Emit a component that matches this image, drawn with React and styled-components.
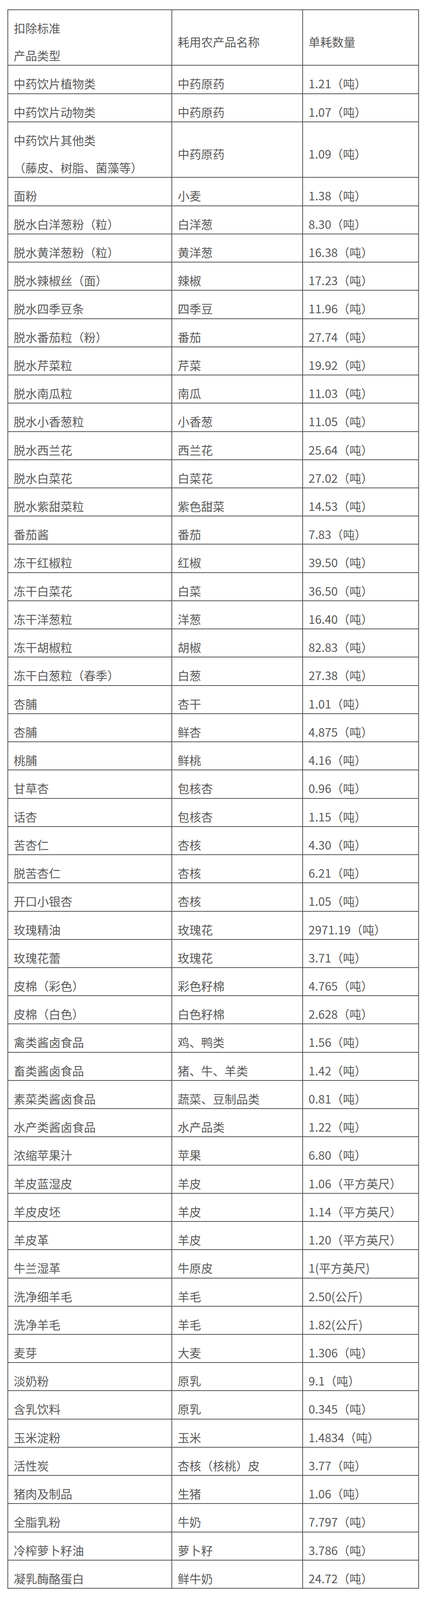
import React from "react";
import styled, { createGlobalStyle } from "styled-components";

const GlobalStyle = createGlobalStyle`
  *, *::before, *::after {
    box-sizing: border-box;
  }
  html, body {
    margin: 0;
    padding: 0;
    background: #ffffff;
  }
  body {
    font-family: "Noto Sans CJK SC", "Noto Sans", sans-serif;
  }
`;

const Page = styled.div`
  padding: 24px 0 0 19px;
  background: #ffffff;
`;

const Table = styled.table`
  border-collapse: collapse;
  table-layout: fixed;
  width: 1052px;
  color: #595959;
  font-family: "Noto Sans CJK SC", "Noto Sans", sans-serif;
  font-size: 30px;
  border: 2px solid #555555;
`;

const Col = styled.col`
  width: ${(p) => p.$w}px;
`;

const Cell = styled.td`
  border: 2px solid #555555;
  padding: 0 0 0 14px;
  vertical-align: middle;
  text-align: left;
  font-weight: 400;
  white-space: nowrap;
`;

const Line = styled.p`
  margin: 0;
  height: 70.24px;
  padding: 25px 0 0;
  line-height: 40px;
`;

const rows = [
  [["中药饮片植物类"], "中药原药", "1.21（吨）"],
  [["中药饮片动物类"], "中药原药", "1.07（吨）"],
  [["中药饮片其他类", "（藤皮、树脂、菌藻等）"], "中药原药", "1.09（吨）"],
  [["面粉"], "小麦", "1.38（吨）"],
  [["脱水白洋葱粉（粒）"], "白洋葱", "8.30（吨）"],
  [["脱水黄洋葱粉（粒）"], "黄洋葱", "16.38（吨）"],
  [["脱水辣椒丝（面）"], "辣椒", "17.23（吨）"],
  [["脱水四季豆条"], "四季豆", "11.96（吨）"],
  [["脱水番茄粒（粉）"], "番茄", "27.74（吨）"],
  [["脱水芹菜粒"], "芹菜", "19.92（吨）"],
  [["脱水南瓜粒"], "南瓜", "11.03（吨）"],
  [["脱水小香葱粒"], "小香葱", "11.05（吨）"],
  [["脱水西兰花"], "西兰花", "25.64（吨）"],
  [["脱水白菜花"], "白菜花", "27.02（吨）"],
  [["脱水紫甜菜粒"], "紫色甜菜", "14.53（吨）"],
  [["番茄酱"], "番茄", "7.83（吨）"],
  [["冻干红椒粒"], "红椒", "39.50（吨）"],
  [["冻干白菜花"], "白菜", "36.50（吨）"],
  [["冻干洋葱粒"], "洋葱", "16.40（吨）"],
  [["冻干胡椒粒"], "胡椒", "82.83（吨）"],
  [["冻干白葱粒（春季）"], "白葱", "27.38（吨）"],
  [["杏脯"], "杏干", "1.01（吨）"],
  [["杏脯"], "鲜杏", "4.875（吨）"],
  [["桃脯"], "鲜桃", "4.16（吨）"],
  [["甘草杏"], "包核杏", "0.96（吨）"],
  [["话杏"], "包核杏", "1.15（吨）"],
  [["苦杏仁"], "杏核", "4.30（吨）"],
  [["脱苦杏仁"], "杏核", "6.21（吨）"],
  [["开口小银杏"], "杏核", "1.05（吨）"],
  [["玫瑰精油"], "玫瑰花", "2971.19（吨）"],
  [["玫瑰花蕾"], "玫瑰花", "3.71（吨）"],
  [["皮棉（彩色）"], "彩色籽棉", "4.765（吨）"],
  [["皮棉（白色）"], "白色籽棉", "2.628（吨）"],
  [["禽类酱卤食品"], "鸡、鸭类", "1.56（吨）"],
  [["畜类酱卤食品"], "猪、牛、羊类", "1.42（吨）"],
  [["素菜类酱卤食品"], "蔬菜、豆制品类", "0.81（吨）"],
  [["水产类酱卤食品"], "水产品类", "1.22（吨）"],
  [["浓缩苹果汁"], "苹果", "6.80（吨）"],
  [["羊皮蓝湿皮"], "羊皮", "1.06（平方英尺）"],
  [["羊皮皮坯"], "羊皮", "1.14（平方英尺）"],
  [["羊皮革"], "羊皮", "1.20（平方英尺）"],
  [["牛兰湿革"], "牛原皮", "1(平方英尺)"],
  [["洗净细羊毛"], "羊毛", "2.50(公斤)"],
  [["洗净羊毛"], "羊毛", "1.82(公斤)"],
  [["麦芽"], "大麦", "1.306（吨）"],
  [["淡奶粉"], "原乳", "9.1（吨）"],
  [["含乳饮料"], "原乳", "0.345（吨）"],
  [["玉米淀粉"], "玉米", "1.4834（吨）"],
  [["活性炭"], "杏核（核桃）皮", "3.77（吨）"],
  [["猪肉及制品"], "生猪", "1.06（吨）"],
  [["全脂乳粉"], "牛奶", "7.797（吨）"],
  [["冷榨萝卜籽油"], "萝卜籽", "3.786（吨）"],
  [["凝乳酶酪蛋白"], "鲜牛奶", "24.72（吨）"],
];

export default function App() {
  return (
    <>
      <GlobalStyle />
      <Page>
        <Table>
          <colgroup>
            <Col $w={420} />
            <Col $w={335} />
            <Col $w={297} />
          </colgroup>
          <thead>
            <tr>
              <Cell as="th">
                <Line>扣除标准</Line>
                <Line>产品类型</Line>
              </Cell>
              <Cell as="th">
                <Line>耗用农产品名称</Line>
              </Cell>
              <Cell as="th">
                <Line>单耗数量</Line>
              </Cell>
            </tr>
          </thead>
          <tbody>
            {rows.map(([type, material, qty], i) => (
              <tr key={i}>
                <Cell>
                  {type.map((t, j) => (
                    <Line key={j}>{t}</Line>
                  ))}
                </Cell>
                <Cell>
                  <Line>{material}</Line>
                </Cell>
                <Cell>
                  <Line>{qty}</Line>
                </Cell>
              </tr>
            ))}
          </tbody>
        </Table>
      </Page>
    </>
  );
}
